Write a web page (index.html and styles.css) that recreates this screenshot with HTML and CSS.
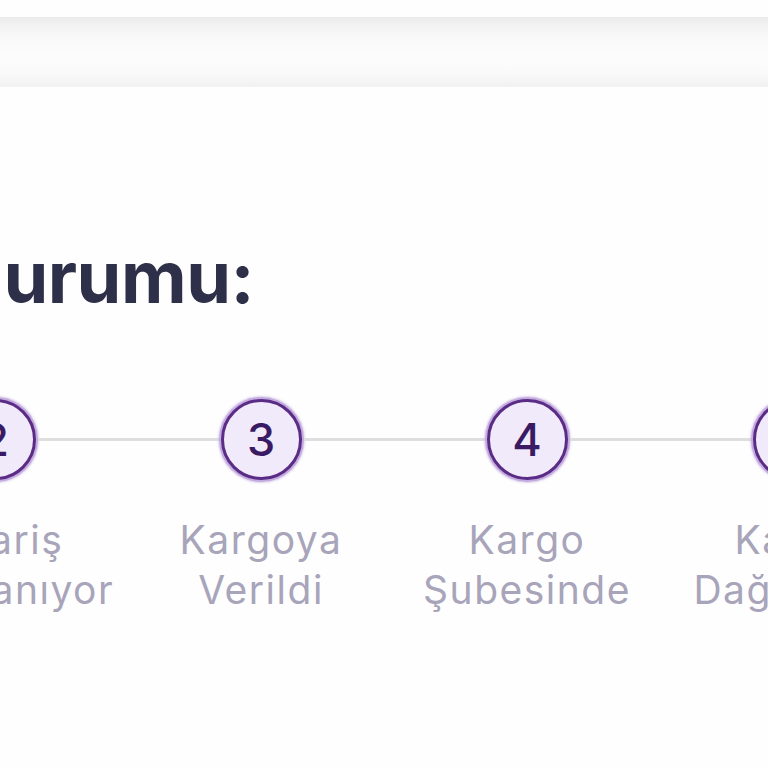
FILE: index.html
```html
<!DOCTYPE html>
<html lang="tr">
<head>
<meta charset="utf-8">
<title>Sipariş durumu</title>
<link rel="stylesheet" href="styles.css">
</head>
<body>
<header class="topbar"></header>
<main class="content">
  <div class="title-wrap">
    <h1 class="title">Sipariş durumu:</h1>
  </div>
  <ol class="steps">
    <li class="step">
      <div class="marker"><span class="seg"></span><span class="circle">2</span><span class="seg"></span></div>
      <div class="label">Sipariş<br>Hazırlanıyor</div>
    </li>
    <li class="step">
      <div class="marker"><span class="seg"></span><span class="circle">3</span><span class="seg"></span></div>
      <div class="label">Kargoya<br>Verildi</div>
    </li>
    <li class="step">
      <div class="marker"><span class="seg"></span><span class="circle">4</span><span class="seg"></span></div>
      <div class="label">Kargo<br>Şubesinde</div>
    </li>
    <li class="step">
      <div class="marker"><span class="seg"></span><span class="circle">5</span><span class="seg"></span></div>
      <div class="label">Kargo<br>Dağıtımda</div>
    </li>
  </ol>
</main>
</body>
</html>
```

FILE: styles.css
```css
* { box-sizing: border-box; }
html, body {
  margin: 0;
  padding: 0;
  background: #fefefe;
  overflow: hidden;
  font-family: Inter, "Noto Sans", sans-serif;
}
.topbar {
  margin-top: 17px;
  height: 70px;
  background: linear-gradient(to bottom, #ebebeb 0%, #f2f2f2 12%, #f9f9f9 30%, #fcfcfc 55%, #fafafa 80%, #f1f1f1 100%);
}
.content {
  padding-top: 150px;
}
.title-wrap {
  width: 254px;
  display: flex;
  justify-content: flex-end;
}
.title {
  margin: 0;
  white-space: nowrap;
  font-size: 72px;
  line-height: 80px;
  font-weight: 700;
  color: #2e2f48;
  letter-spacing: -0.5px;
}
.steps {
  list-style: none;
  margin: 80px 0 0 -138px;
  padding: 0;
  display: flex;
}
.step {
  flex: 0 0 266px;
  display: flex;
  flex-direction: column;
  align-items: center;
}
.marker {
  width: 100%;
  display: flex;
  align-items: center;
}
.seg {
  flex: 1;
  height: 3px;
  background: #dedede;
}
.circle {
  width: 81px;
  height: 81px;
  border-radius: 50%;
  border: 3px solid #5a2c85;
  box-shadow: 0 0 0 2px #c3aadf, 0 0 2px 3px rgba(200, 178, 226, 0.6);
  background: #f1eafb;
  color: #3a1b63;
  font-size: 45px;
  font-weight: 500;
  display: flex;
  align-items: center;
  justify-content: center;
  margin: 2px;
}
.label {
  margin-top: 33px;
  text-align: center;
  font-size: 39px;
  line-height: 50px;
  letter-spacing: 1.5px;
  color: #a8a4ba;
  white-space: nowrap;
}
```
